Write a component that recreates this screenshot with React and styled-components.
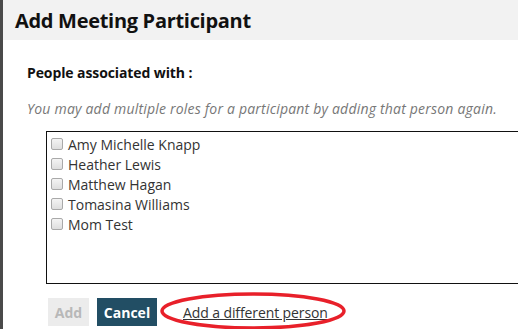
import React from "react";
import styled, { createGlobalStyle } from "styled-components";

const Global = createGlobalStyle`
  html, body { margin: 0; padding: 0; background: #fff; }
  body { font-family: "Open Sans", "Liberation Sans", sans-serif; overflow: hidden; }
`;

const Frame = styled.div`
  width: 518px;
  height: 329px;
  display: flex;
  overflow: hidden;
`;

const Edge = styled.div`
  width: 3px;
  flex: none;
  background: #4a4a4a;
`;

const Dialog = styled.div`
  flex: 1;
  display: flex;
  flex-direction: column;
  min-width: 0;
`;

const Header = styled.div`
  height: 40px;
  background: #f2f2f2;
  display: flex;
  align-items: center;
  padding-left: 12px;
  box-sizing: border-box;
`;

const Title = styled.h1`
  margin: 0;
  font-size: 20px;
  font-weight: 700;
  color: #111;
  letter-spacing: -0.3px;
`;

const Body = styled.div`
  padding: 24px 0 0 24px;
  display: flex;
  flex-direction: column;
`;

const Label = styled.div`
  font-size: 14px;
  font-weight: 700;
  color: #111;
  line-height: 18px;
  letter-spacing: -0.1px;
`;

const Hint = styled.div`
  margin-top: 17px;
  font-size: 14px;
  font-style: italic;
  color: #777;
  line-height: 20px;
  letter-spacing: 0.2px;
  white-space: nowrap;
`;

const ListBox = styled.div`
  margin: 12px 0 0 19px;
  width: 520px;
  height: 153px;
  border: 1px solid #111;
  box-sizing: border-box;
  padding: 2px 0 0 4px;
  display: flex;
  flex-direction: column;
`;

const Row = styled.label`
  display: flex;
  align-items: center;
  height: 20px;
  font-size: 14px;
  color: #333;
  white-space: nowrap;
`;

const Box = styled.span`
  width: 10px;
  height: 10px;
  border: 1px solid #a9a9a9;
  border-radius: 2px;
  background: linear-gradient(#f4f4f4, #dedede);
  margin-right: 5px;
  flex: none;
`;

const Actions = styled.div`
  margin: 14px 0 0 21px;
  display: flex;
  align-items: center;
  position: relative;
`;

const Button = styled.button`
  height: 28px;
  width: ${(p) => (p.$primary ? "60px" : "41px")};
  padding: 0;
  margin-right: 8px;
  border: none;
  font-family: inherit;
  font-size: 14px;
  font-weight: 700;
  background: ${(p) => (p.$primary ? "#224e64" : "#ececec")};
  color: ${(p) => (p.$primary ? "#fff" : "#b8b8b8")};
`;

const LinkWrap = styled.span`
  position: relative;
  margin-left: 18px;
`;

const Link = styled.a`
  font-size: 14px;
  color: #333;
  text-decoration: underline;
  letter-spacing: -0.1px;
`;

const Ellipse = styled.svg`
  position: absolute;
  left: -24px;
  top: -10px;
  pointer-events: none;
`;

const people = [
  "Amy Michelle Knapp",
  "Heather Lewis",
  "Matthew Hagan",
  "Tomasina Williams",
  "Mom Test",
];

export default function App() {
  return (
    <>
      <Global />
      <Frame>
        <Edge />
        <Dialog>
          <Header>
            <Title>Add Meeting Participant</Title>
          </Header>
          <Body>
            <Label>People associated with :</Label>
            <Hint>You may add multiple roles for a participant by adding that person again.</Hint>
            <ListBox>
              {people.map((p) => (
                <Row key={p}>
                  <Box />
                  {p}
                </Row>
              ))}
            </ListBox>
            <Actions>
              <Button>Add</Button>
              <Button $primary>Cancel</Button>
              <LinkWrap>
                <Link href="#">Add a different person</Link>
                <Ellipse width="190" height="40" viewBox="0 0 190 40">
                  <ellipse cx="94" cy="20" rx="91" ry="17" fill="none" stroke="#e8202a" strokeWidth="3.5" />
                </Ellipse>
              </LinkWrap>
            </Actions>
          </Body>
        </Dialog>
      </Frame>
    </>
  );
}
